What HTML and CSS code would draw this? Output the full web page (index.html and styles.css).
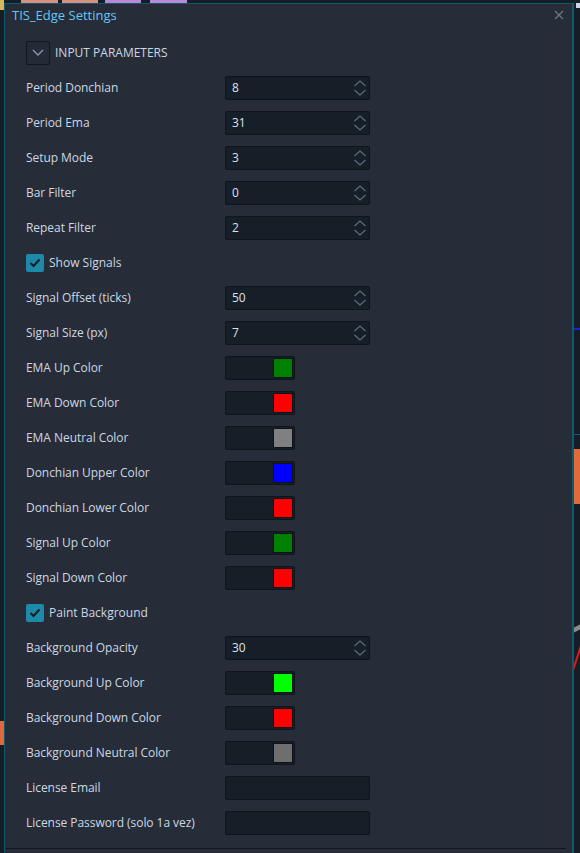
FILE: index.html
```html
<!DOCTYPE html>
<html>
<head>
<meta charset="utf-8">
<link rel="stylesheet" href="styles.css">
</head>
<body>
<div class="chart">
  <div class="tab tab-y"></div>
  <div class="tab tab-s1"></div>
  <div class="tab tab-s2"></div>
  <div class="tab tab-p1"></div>
  <div class="tab tab-p2"></div>
  <div class="mark mark-tr"></div>
  <div class="mark line-blue"></div>
  <div class="mark line-teal"></div>
  <div class="mark block-orange-r"></div>
  <div class="mark block-orange-l"></div>
  <div class="mark line-gray"></div>
  <div class="mark line-red"></div>
</div>

<div class="dialog">
  <div class="titlebar">
    <span class="title">TIS_Edge Settings</span>
    <svg class="close" width="10" height="10" viewBox="0 0 10 10"><path d="M1 1L9 9M9 1L1 9" stroke="#6c7888" stroke-width="1.2" fill="none"/></svg>
  </div>
  <div class="body">
    <div class="row">
      <div class="section">
        <span class="chev-btn"><svg width="12" height="7" viewBox="0 0 12 7"><path d="M1 1L6 6L11 1" stroke="#8c9aa8" stroke-width="1.3" fill="none"/></svg></span>
        <span>INPUT PARAMETERS</span>
      </div>
    </div>

    <div class="row"><span class="label">Period Donchian</span><div class="num"><span>8</span><i class="spin"></i></div></div>
    <div class="row"><span class="label">Period Ema</span><div class="num"><span>31</span><i class="spin"></i></div></div>
    <div class="row"><span class="label">Setup Mode</span><div class="num"><span>3</span><i class="spin"></i></div></div>
    <div class="row"><span class="label">Bar Filter</span><div class="num"><span>0</span><i class="spin"></i></div></div>
    <div class="row"><span class="label">Repeat Filter</span><div class="num"><span>2</span><i class="spin"></i></div></div>
    <div class="row"><label class="check"><span class="box"><svg width="12" height="10" viewBox="0 0 12 10"><path d="M1.5 5L4.5 8L10.5 1.5" stroke="#0e1c28" stroke-width="2" fill="none"/></svg></span>Show Signals</label></div>
    <div class="row"><span class="label">Signal Offset (ticks)</span><div class="num"><span>50</span><i class="spin"></i></div></div>
    <div class="row"><span class="label">Signal Size (px)</span><div class="num"><span>7</span><i class="spin"></i></div></div>
    <div class="row"><span class="label">EMA Up Color</span><div class="color"><b class="sw green"></b></div></div>
    <div class="row"><span class="label">EMA Down Color</span><div class="color"><b class="sw red"></b></div></div>
    <div class="row"><span class="label">EMA Neutral Color</span><div class="color"><b class="sw gray"></b></div></div>
    <div class="row"><span class="label">Donchian Upper Color</span><div class="color"><b class="sw blue"></b></div></div>
    <div class="row"><span class="label">Donchian Lower Color</span><div class="color"><b class="sw red"></b></div></div>
    <div class="row"><span class="label">Signal Up Color</span><div class="color"><b class="sw green"></b></div></div>
    <div class="row"><span class="label">Signal Down Color</span><div class="color"><b class="sw red"></b></div></div>
    <div class="row"><label class="check"><span class="box"><svg width="12" height="10" viewBox="0 0 12 10"><path d="M1.5 5L4.5 8L10.5 1.5" stroke="#0e1c28" stroke-width="2" fill="none"/></svg></span>Paint Background</label></div>
    <div class="row"><span class="label">Background Opacity</span><div class="num"><span>30</span><i class="spin"></i></div></div>
    <div class="row"><span class="label">Background Up Color</span><div class="color"><b class="sw lime"></b></div></div>
    <div class="row"><span class="label">Background Down Color</span><div class="color"><b class="sw red"></b></div></div>
    <div class="row"><span class="label">Background Neutral Color</span><div class="color"><b class="sw dgray"></b></div></div>
    <div class="row"><span class="label">License Email</span><div class="text"></div></div>
    <div class="row"><span class="label">License Password (solo 1a vez)</span><div class="text"></div></div>
  </div>
  <div class="footer-line"></div>
</div>
</body>
</html>
```

FILE: styles.css
```css
* { box-sizing: border-box; }
html, body { margin: 0; height: 100%; }
body {
  background: #151d27;
  font-family: "Open Sans", "Noto Sans", sans-serif;
  font-size: 12px;
  overflow: hidden;
  position: relative;
}
.chart { position: absolute; inset: 0; }
.tab { position: absolute; top: 0; height: 6px; }
.tab-y { left: 0; width: 4px; height: 10px; background: #d8b95a; }
.tab-s1 { left: 21px; width: 37px; background: #d9907e; }
.tab-s2 { left: 62px; width: 36px; background: #d9907e; }
.tab-p1 { left: 105px; width: 36px; background: #b989d8; }
.tab-p2 { left: 150px; width: 37px; background: #b989d8; }
.mark { position: absolute; }
.mark-tr { left: 576px; top: 3px; width: 4px; height: 5px; background: #c8d4ea; }
.line-blue { left: 574px; top: 328px; width: 6px; height: 2px; background: #1a24d8; }
.line-teal { left: 574px; top: 434px; width: 6px; height: 1px; background: #12607a; }
.block-orange-r { left: 574px; top: 449px; width: 6px; height: 55px; background: #e06a3c; }
.block-orange-l { left: 0; top: 721px; width: 4px; height: 24px; background: #e06a3c; }
.line-gray { left: 574px; top: 626px; width: 6px; height: 5px; background: #8a8a8a; transform: skewY(-25deg); }
.line-red { left: 576px; top: 646px; width: 2px; height: 24px; background: #e01818; transform: rotate(18deg); }

.dialog {
  position: absolute;
  left: 4px;
  top: 3px;
  width: 570px;
  height: 870px;
  background: #262d38;
  border: 1px solid #0f586e;
  border-right-width: 2px;
  display: flex;
  flex-direction: column;
}
.titlebar {
  height: 31px;
  display: flex;
  align-items: flex-start;
  justify-content: space-between;
  padding: 2px 8px 0 7px;
}
.title {
  color: #62c8f6;
  font-size: 13px;
  line-height: 18px;
}
.close { margin-top: 4px; }
.body { padding-left: 21px; }
.row {
  height: 35px;
  display: grid;
  grid-template-columns: 199px auto;
  align-items: center;
  color: #ccd7e3;
}
.label { letter-spacing: -0.05px; }
.section {
  display: flex;
  align-items: center;
  gap: 5px;
  grid-column: 1 / 3;
  color: #ccd7e3;
  font-size: 12px;
}
.chev-btn {
  width: 24px;
  height: 24px;
  border: 1px solid #12181f;
  border-radius: 2px;
  display: flex;
  align-items: center;
  justify-content: center;
  background: #242b36;
}
.num, .color, .text {
  height: 24px;
  background: #161e28;
  border: 1px solid #10151b;
  border-radius: 2px;
}
.num, .text { width: 145px; }
.num {
  display: flex;
  align-items: center;
  justify-content: space-between;
  padding: 0 2px 0 6px;
  color: #d8e3ef;
}
.spin {
  width: 14px;
  height: 18px;
  background: url("data:image/svg+xml;utf8,<svg xmlns='http://www.w3.org/2000/svg' width='14' height='18' viewBox='0 0 14 18'><path d='M1.5 7L7 2L12.5 7M1.5 11L7 16L12.5 11' stroke='%235c6c7e' stroke-width='1.2' fill='none'/></svg>") no-repeat center;
}
.color {
  width: 70px;
  display: flex;
  justify-content: flex-end;
  align-items: center;
  padding-right: 1px;
}
.sw {
  width: 20px;
  height: 20px;
  border: 1px solid #0e1318;
}
.green { background: #008000; }
.red { background: #ff0000; }
.gray { background: #808080; }
.blue { background: #0000ff; }
.lime { background: #00ff00; }
.dgray { background: #6e6e6e; }
.check {
  display: flex;
  align-items: center;
  gap: 5px;
  grid-column: 1 / 3;
}
.box {
  width: 18px;
  height: 18px;
  background: #1d8aa9;
  border-radius: 2px;
  display: flex;
  align-items: center;
  justify-content: center;
}
.footer-line {
  margin: 8px 6px 0 1px;
  height: 1px;
  background: #12171d;
}
```
